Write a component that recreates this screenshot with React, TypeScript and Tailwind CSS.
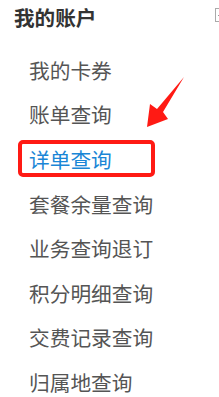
import React from "react";

const items = [
  "我的卡券",
  "账单查询",
  "详单查询",
  "套餐余量查询",
  "业务查询退订",
  "积分明细查询",
  "交费记录查询",
  "归属地查询",
];

export default function App() {
  return (
    <div
      className="relative w-[219px] h-[397px] overflow-hidden bg-white"
      style={{ fontFamily: '"Microsoft YaHei", "Noto Sans CJK SC", sans-serif' }}
    >
      <div className="flex items-center h-[34px] pl-[14px] text-[20.6px] font-bold text-[#333]">
        我的账户
      </div>
      {/* collapse toggle, cut off at the edge */}
      <div className="absolute left-[215px] top-[8px] w-[10px] h-[14px] border border-[#aaa] bg-white">
        <div className="absolute left-[2px] top-[6px] w-[3px] h-px bg-[#999]" />
      </div>

      <ul className="mt-[14px] pl-[29px]">
        {items.map((name, i) => (
          <li
            key={name}
            className={
              "relative flex items-center h-[44.6px] text-[20.7px] " +
              (i === 2 ? "text-[#1a86d6]" : "text-[#555]")
            }
          >
            {name}
            {i === 2 && (
              <span className="absolute left-[-11px] top-[3px] w-[137px] h-[37px] border-4 border-[#ff1a14] rounded-[5px]" />
            )}
          </li>
        ))}
      </ul>

      {/* annotation arrow */}
      <svg
        className="absolute left-0 top-0"
        width="219"
        height="397"
        viewBox="0 0 219 397"
      >
        <polygon
          points="184,77 163,112 168,119 147,127 150,104 157,109"
          fill="#ff1a14"
        />
      </svg>
    </div>
  );
}
